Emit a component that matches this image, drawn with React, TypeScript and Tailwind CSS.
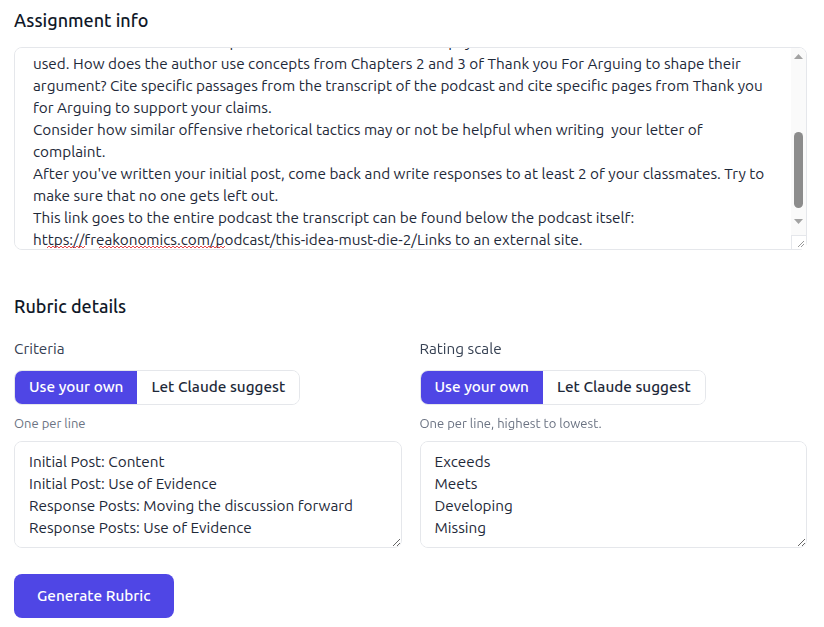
import { useEffect, useRef, useState } from 'react';

const ASSIGNMENT = [
  'Listen to the Freakonomics episode "This Idea Must Die" and pay attention to the rhetorical tactics that are',
  'used. How does the author use concepts from Chapters 2 and 3 of Thank you For Arguing to shape their',
  'argument? Cite specific passages from the transcript of the podcast and cite specific pages from Thank you',
  'for Arguing to support your claims.',
  'Consider how similar offensive rhetorical tactics may or not be helpful when writing  your letter of',
  'complaint.',
  "After you've written your initial post, come back and write responses to at least 2 of your classmates. Try to",
  'make sure that no one gets left out.',
  'This link goes to the entire podcast the transcript can be found below the podcast itself:',
  'https://freakonomics.com/podcast/this-idea-must-die-2/Links to an external site.',
].join('\n');

const CRITERIA = [
  'Initial Post: Content',
  'Initial Post: Use of Evidence',
  'Response Posts: Moving the discussion forward',
  'Response Posts: Use of Evidence',
].join('\n');

const SCALE = ['Exceeds', 'Meets', 'Developing', 'Missing'].join('\n');

function Toggle() {
  const [mode, setMode] = useState<'own' | 'claude'>('own');
  return (
    <div className="inline-flex rounded-lg border border-gray-200 overflow-hidden text-[15.3px] font-medium">
      <button
        onClick={() => setMode('own')}
        className={`h-[33px] px-[14px] ${mode === 'own' ? 'bg-[#4f46e5] text-white' : 'bg-white text-gray-800'}`}
      >
        Use your own
      </button>
      <button
        onClick={() => setMode('claude')}
        className={`h-[33px] px-[14px] ${mode === 'claude' ? 'bg-[#4f46e5] text-white' : 'bg-white text-gray-800'}`}
      >
        Let Claude suggest
      </button>
    </div>
  );
}

function Field({ label, hint, value }: { label: string; hint: string; value: string }) {
  return (
    <div className="flex flex-col">
      <label className="text-[15.3px] leading-[22px] text-gray-700">{label}</label>
      <div className="mt-[10px]">
        <Toggle />
      </div>
      <p className="mt-[9px] text-[13px] leading-[18px] text-gray-500">{hint}</p>
      <textarea
        defaultValue={value}
        spellCheck={false}
        className="mt-[9px] h-[107px] w-full rounded-lg border border-gray-200 bg-white px-[14px] py-[9px] text-[15.3px] leading-[22px] text-gray-800 outline-none"
      />
    </div>
  );
}

// squiggly spell-check underline
function Squiggle({ width }: { width: number }) {
  let d = 'M0 2';
  for (let x = 0; x < width; x += 4) d += ` L${x + 2} 0 L${x + 4} 2`;
  return (
    <svg width={width} height={3} viewBox={`0 0 ${width} 3`} className="block">
      <path d={d} stroke="#e5484d" strokeWidth="1" fill="none" />
    </svg>
  );
}

function FakeScrollbar() {
  return (
    <div className="absolute right-[1px] top-[1px] bottom-[1px] w-[15px] rounded-r-lg bg-[#fafafa] flex flex-col items-center">
      <svg width="9" height="5" viewBox="0 0 9 5" className="mt-[6px]">
        <path d="M0 5 L4.5 0 L9 5 Z" fill="#a3a3a3" />
      </svg>
      <div className="mt-[73px] h-[76px] w-[9px] rounded-full bg-[#8c8c8c]" />
      <svg width="9" height="5" viewBox="0 0 9 5" className="mt-[11px]">
        <path d="M0 0 L9 0 L4.5 5 Z" fill="#a3a3a3" />
      </svg>
      <div className="mt-auto h-[14px] w-[15px] border-l border-t border-gray-200 bg-white flex items-end justify-end">
        <svg width="8" height="8" viewBox="0 0 8 8" className="mb-[1px] mr-[1px]">
          <path d="M1 7 L7 1 M4 7 L7 4" stroke="#9a9a9a" strokeWidth="1" />
        </svg>
      </div>
    </div>
  );
}

export default function App() {
  const infoRef = useRef<HTMLTextAreaElement>(null);

  useEffect(() => {
    const el = infoRef.current;
    if (el) el.scrollTop = el.scrollHeight - el.clientHeight - 12;
  }, []);

  return (
    <div
      className="bg-white pl-[14px] pr-[17px] pt-[6px] pb-4 text-gray-900"
      style={{ fontFamily: 'Ubuntu, "Noto Sans", sans-serif' }}
    >
      <h2 className="text-[18px] leading-[28px] font-medium text-gray-900">Assignment info</h2>
      <div className="relative mt-[13px]">
        <textarea
          ref={infoRef}
          defaultValue={ASSIGNMENT}
          spellCheck={false}
          wrap="off"
          className="block h-[203px] w-full resize-none overflow-y-scroll overflow-x-hidden whitespace-pre rounded-lg border border-gray-200 bg-white pl-[18px] pr-[24px] py-[10px] text-[15.3px] leading-[22px] text-gray-800 outline-none [scrollbar-width:none]"
        />
        <FakeScrollbar />
        <div className="pointer-events-none absolute left-[33px] top-[199px] flex">
          <Squiggle width={38} />
          <div className="w-[14px]" />
          <Squiggle width={126} />
        </div>
      </div>

      <h2 className="mt-[42px] text-[18px] leading-[28px] font-medium text-gray-900">Rubric details</h2>
      <div className="mt-[18px] grid grid-cols-2 gap-[18px]">
        <Field label="Criteria" hint="One per line" value={CRITERIA} />
        <Field label="Rating scale" hint="One per line, highest to lowest." value={SCALE} />
      </div>

      <button className="mt-[26px] h-[44px] rounded-lg bg-[#4f46e5] px-[23px] text-[15.3px] font-medium text-white">
        Generate Rubric
      </button>
    </div>
  );
}
